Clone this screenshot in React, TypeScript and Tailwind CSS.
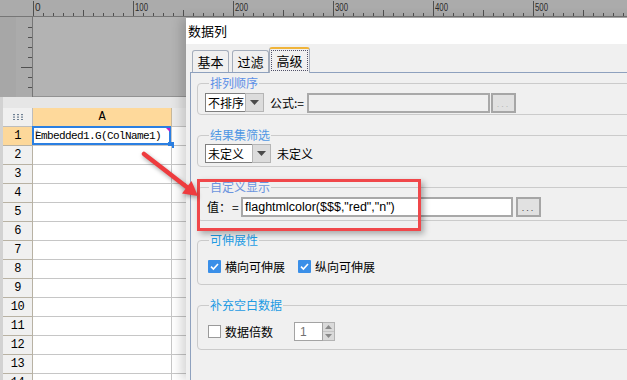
import React from "react";

const cjk = "font-['Noto_Sans_CJK_SC','Noto_Sans',sans-serif]";
const mono = "font-['Liberation_Mono',monospace]";

function TopRuler() {
  const ticks = Array.from({ length: 60 }, (_, i) => i);
  const labels = [0, 100, 200, 300, 400, 500];
  return (
    <svg width="627" height="17" className="block">
      <rect width="627" height="17" fill="#ababab" />
      <line x1="0" y1="16.5" x2="627" y2="16.5" stroke="#767676" />
      {ticks.map((i) => {
        const x = 33.5 + i * 10;
        const y1 = i % 10 === 0 ? 1 : i % 5 === 0 ? 10 : 13;
        return <line key={i} x1={x} x2={x} y1={y1} y2={16} stroke="#505050" />;
      })}
      {labels.map((n) => (
        <text
          key={n}
          x={35 + n}
          y={11}
          fontSize="10"
          fill="#2a2a2a"
          fontFamily="Liberation Sans, sans-serif"
          textLength={n === 0 ? undefined : 13}
          lengthAdjust="spacingAndGlyphs"
        >
          {n}
        </text>
      ))}
    </svg>
  );
}

function SideRuler() {
  const ticks = [10, 20, 30, 40, 50, 60, 70];
  return (
    <svg width="17" height="80" className="block shrink-0">
      <rect width="17" height="80" fill="#ababab" />
      <line x1="16.5" y1="0" x2="16.5" y2="80" stroke="#767676" />
      {ticks.map((y) => (
        <line key={y} x1={y === 50 ? 5 : 12} x2={16} y1={y + 0.5} y2={y + 0.5} stroke="#505050" />
      ))}
      <text x="0" y="0" transform="translate(19,2) rotate(90)" fontSize="10" fill="#2a2a2a" fontFamily="Liberation Sans, sans-serif">
        0
      </text>
    </svg>
  );
}

function CornerIcon() {
  const pts = [0, 4, 8];
  const rows = [0, 2.5, 5];
  return (
    <svg width="10" height="6" viewBox="0 0 10 6">
      {rows.map((y) => pts.map((x) => <rect key={`${x}-${y}`} x={x} y={y} width="2" height="1.2" fill="#6d7f92" />))}
    </svg>
  );
}

function Sheet() {
  const rows = Array.from({ length: 14 }, (_, i) => i + 1);
  return (
    <div className="flex flex-col border-l-[3px] border-[#d2d2d2] bg-white">
      <div className="flex h-[19px]">
        <div className="flex w-[30px] items-center justify-center border-b border-r border-[#bdbdbd] bg-[#f0f0f0]">
          <CornerIcon />
        </div>
        <div className={`flex w-[139px] items-center justify-center border-b border-r border-[#c9b99a] bg-[#fed99b] text-[12px] text-black ${mono}`}>A</div>
        <div className="flex-1 border-b border-[#c6c6c6] bg-[#ececec]" />
      </div>
      {rows.map((n) => (
        <div key={n} className="flex h-[19px]">
          <div
            className={`flex w-[30px] items-center justify-center border-b border-r border-[#b8b2a4] text-[12px] tracking-[-0.5px] text-black ${mono} ${
              n === 1 ? "bg-[#fdd89a]" : "bg-[#f0f0f0]"
            }`}
          >
            {n}
          </div>
          <div className="relative w-[139px] border-b border-r border-[#c6c6c6] bg-white">
            {n === 1 && (
              <>
                <div className={`flex h-full items-center pl-[2px] text-[11px] tracking-[-0.6px] text-black ${mono}`}>Embedded1.G(ColName1)</div>
                <div className="absolute -left-px -top-px bottom-0 right-0 border-2 border-[#2b7fe2]" />
                <div className="absolute left-[2px] top-[1px] text-[7px] leading-[7px] text-[#777]">+</div>
                <div className="absolute right-[1px] top-[1px] h-0 w-0 border-l-[4px] border-t-[4px] border-l-transparent border-t-[#c01fc8]" />
                <div className="absolute -bottom-[3px] -right-[3px] h-[6px] w-[6px] bg-[#2b7fe2]" />
              </>
            )}
          </div>
          <div className="flex-1 border-b border-[#c6c6c6] bg-white" />
        </div>
      ))}
    </div>
  );
}

function Caret() {
  return (
    <svg width="9" height="5" viewBox="0 0 9 5">
      <path d="M0 0 H9 L4.5 5 Z" fill="#4a4a4a" />
    </svg>
  );
}

function Combo({ value, fieldClass }: { value: string; fieldClass: string }) {
  return (
    <div className="flex h-[19px]">
      <div className={`flex items-center border border-r-0 border-[#7f7f7f] bg-white pl-[2px] text-[12px] leading-none text-black ${fieldClass}`}>{value}</div>
      <div className="flex w-[19px] items-center justify-center border border-[#b5b5b5] bg-[#dcdcdc]">
        <Caret />
      </div>
    </div>
  );
}

function Dots({ disabled }: { disabled?: boolean }) {
  return (
    <div
      className={`flex h-[20px] w-[25px] items-end justify-center border-2 border-[#a6a6a6] bg-[#e1e1e1] pb-[2px] text-[9px] leading-none tracking-[2px] font-['Liberation_Sans',sans-serif] ${
        disabled ? "text-[#b4b4b4]" : "text-[#3a3a3a]"
      }`}
    >
      ...
    </div>
  );
}

function Check({ checked }: { checked?: boolean }) {
  return checked ? (
    <div className="flex h-[13px] w-[13px] items-center justify-center rounded-[1px] bg-[#3a8fe8]">
      <svg width="11" height="11" viewBox="0 0 11 11">
        <path d="M2 5.6 L4.4 8 L9 3" fill="none" stroke="white" strokeWidth="1.6" />
      </svg>
    </div>
  ) : (
    <div className="h-[13px] w-[13px] border border-[#9a9a9a] bg-white" />
  );
}

function Group({ title, color, className, children }: { title: string; color: string; className: string; children: React.ReactNode }) {
  return (
    <fieldset className={`w-[500px] rounded-[4px] border border-[#cbcbcb] pl-[7px] ${className}`}>
      <legend className={`ml-[4px] px-px text-[12px] leading-[14px] ${color}`}>{title}</legend>
      {children}
    </fieldset>
  );
}

function Dialog() {
  return (
    <div className={`absolute left-[186px] top-[18px] flex h-[362px] w-[560px] flex-col bg-[#f0f0f0] text-black shadow-[-5px_0_10px_rgba(0,0,0,0.16)] ${cjk}`}>
      <div className="flex h-[26px] items-center bg-white pl-[2px] text-[13px]">数据列</div>
      <div className="flex flex-1 flex-col pl-[4px] pt-[3px]">
        <div className="flex h-[25px] items-end pl-[2px]">
          <div className="mr-[3px] flex h-[22px] w-[37px] items-center justify-center rounded-t-[3px] border border-b-0 border-[#a4adbb] bg-[#f0f0f0] text-[13px] leading-none">基本</div>
          <div className="flex h-[22px] w-[37px] items-center justify-center rounded-t-[3px] border border-b-0 border-[#a4adbb] bg-[#f0f0f0] text-[13px] leading-none">过滤</div>
          <div className="relative z-10 -mb-px flex h-[26px] w-[41px] rounded-t-[3px] border border-b-0 border-t-2 border-[#a4adbb] border-t-[#f0b43a] bg-[#f0f0f0] px-[1px] pb-[2px] pt-[1px]">
            <div className="flex flex-1 items-center justify-center border border-dotted border-[#505068] text-[13px] leading-none">高级</div>
          </div>
        </div>
        <div className="flex flex-1 flex-col border-l border-t border-[#8ea1be] pl-[6px]">
          <Group title="排列顺序" color="text-[#5d8fe6]" className="mt-[3px] pb-[2px] pt-[3px]">
            <div className="flex h-[19px] items-center">
              <Combo value="不排序" fieldClass="w-[40px]" />
              <span className="ml-[6px] w-[37px] text-[12px] leading-none">公式:=</span>
              <div className="h-[20px] w-[183px] border-2 border-[#a9a9a9] bg-[#f0f0f0]" />
              <div className="ml-[1px]">
                <Dots disabled />
              </div>
            </div>
          </Group>
          <Group title="结果集筛选" color="text-[#4f98e4]" className="mt-[13px] pb-[3px] pt-[2px]">
            <div className="flex h-[19px] items-center">
              <Combo value="未定义" fieldClass="w-[47px]" />
              <span className="ml-[6px] text-[12px] leading-none">未定义</span>
            </div>
          </Group>
          <Group title="自定义显示" color="text-[#6b94de]" className="mt-[13px] pb-[3px] pt-[3px]">
            <div className="flex h-[20px] items-center">
              <span className="ml-[2px] w-[25px] text-[12px] leading-none">值：</span>
              <span className="w-[9px] text-[12px] leading-none">=</span>
              <div className="flex h-[20px] w-[272px] items-center border-2 border-[#a8a8a8] bg-white pl-[2px] text-[12.5px] leading-none font-['Liberation_Sans',sans-serif]">
                flaghtmlcolor($$$,"red","n")
              </div>
              <div className="ml-[3px]">
                <Dots />
              </div>
            </div>
          </Group>
          <Group title="可伸展性" color="text-[#1d9be3]" className="mt-[12px] pb-[8px] pt-[10px]">
            <div className="flex h-[19px] items-center">
              <div className="ml-[3px]">
                <Check checked />
              </div>
              <span className="ml-[4px] text-[12px] leading-none">横向可伸展</span>
              <div className="ml-[13px]">
                <Check checked />
              </div>
              <span className="ml-[4px] text-[12px] leading-none">纵向可伸展</span>
            </div>
          </Group>
          <Group title="补充空白数据" color="text-[#1d9be3]" className="mt-[13px] pb-[8px] pt-[10px]">
            <div className="flex h-[19px] items-center">
              <div className="ml-[3px]">
                <Check />
              </div>
              <span className="ml-[4px] w-[69px] text-[12px] leading-none">数据倍数</span>
              <div className="flex h-[19px]">
                <div className="flex w-[29px] items-center border border-[#a3a3a3] bg-white pl-[5px] text-[12px] leading-none text-[#707070] font-['Liberation_Sans',sans-serif]">1</div>
                <div className="flex w-[12px] flex-col border border-l-0 border-[#b3b3b3]">
                  <div className="flex flex-1 items-center justify-center border-b border-[#c4c4c4] bg-[#dadada]">
                    <svg width="7" height="4" viewBox="0 0 7 4">
                      <path d="M0 4 H7 L3.5 0 Z" fill="#8a8a8a" />
                    </svg>
                  </div>
                  <div className="flex flex-1 items-center justify-center bg-[#dadada]">
                    <svg width="7" height="4" viewBox="0 0 7 4">
                      <path d="M0 0 H7 L3.5 4 Z" fill="#8a8a8a" />
                    </svg>
                  </div>
                </div>
              </div>
            </div>
          </Group>
        </div>
      </div>
    </div>
  );
}

function Annotations() {
  return (
    <>
      <div className="pointer-events-none absolute left-[197px] top-[179px] h-[52px] w-[224px] border-[3px] border-[#f0474a] shadow-[3px_3px_6px_rgba(0,0,0,0.3)]" />
      <svg width="627" height="380" className="pointer-events-none absolute left-0 top-0 drop-shadow-[1px_2px_2px_rgba(0,0,0,0.35)]">
        <line x1="144" y1="154" x2="188" y2="188" stroke="#ee3b3e" strokeWidth="4.5" strokeLinecap="round" />
        <path d="M198 196 L182 193.5 L191.5 181 Z" fill="#ee3b3e" />
      </svg>
    </>
  );
}

export default function App() {
  return (
    <div className="relative h-[380px] w-[627px] overflow-hidden bg-[#e4e4e4]">
      <TopRuler />
      <div className="flex h-[80px]">
        <div className="w-[16px] shrink-0 bg-[#a7a7a7]" />
        <SideRuler />
        <div className="flex-1 border-b border-[#929292] bg-[#b3b3b3]" />
      </div>
      <div className="h-[11px] border-l-[3px] border-[#d2d2d2] bg-[#e6e6e6]" />
      <Sheet />
      <Dialog />
      <Annotations />
    </div>
  );
}
